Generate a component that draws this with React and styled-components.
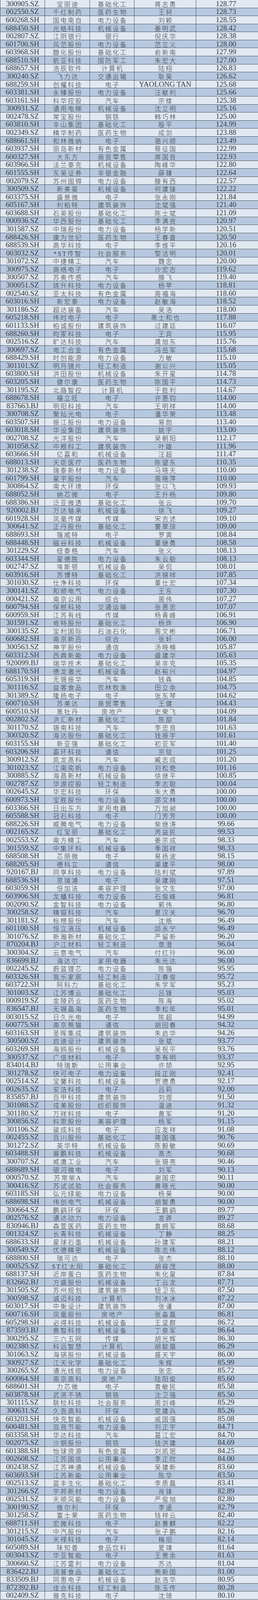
import React from 'react';
import styled, { createGlobalStyle } from 'styled-components';

const GlobalStyle = createGlobalStyle`
  html, body {
    margin: 0;
    padding: 0;
    background: #e2e9f2;
  }
`;

const raw = `300905.SZ,宝丽迪,基础化工,蒋志勇,128.77
002550.SZ,千红制药,医药生物,王轲,128.73
600268.SH,国电南自,电力设备,刘颖,128.55
688450.SH,光格科技,机械设备,姜明武,128.42
002807.SZ,江阴银行,银行,倪庆华,128.38
601700.SH,风范股份,电力设备,范立义,128.00
603968.SH,醋化股份,基础化工,俞新南,127.99
688510.SH,航亚科技,国防军工,朱宏大,127.00
688657.SH,浩辰软件,计算机,陆翔,126.83
300240.SZ,飞力达,交通运输,耿昊,126.62
688259.SH,创耀科技,电子,YAOLONG TAN,125.68
603381.SH,永臻股份,电力设备,汪献利,125.66
603161.SH,科华控股,汽车,宗楼,125.38
300931.SZ,通用电梯,机械设备,沈立明,125.16
002478.SZ,常宝股份,钢铁,韩巧林,125.00
603810.SH,丰山集团,基础化工,殷平,124.99
002349.SZ,精华制药,医药生物,成剑,123.88
688661.SH,和林微纳,电子,骆兴顺,123.49
603937.SH,丽岛新材,有色金属,蔡征国,122.99
600327.SH,大东方,商贸零售,席国良,122.93
603966.SH,法兰泰克,机械设备,陶峰华,122.80
601555.SH,东吴证券,非银金融,薛臻,122.64
002079.SZ,苏州固锝,电力设备,滕有西,122.57
300509.SZ,新美星,机械设备,何建锋,122.22
603375.SH,盛景微,电子,张永刚,121.84
605167.SH,利柏特,建筑装饰,沈斌强,121.40
603688.SH,石英股份,基础化工,陈士斌,121.09
000936.SZ,华西股份,基础化工,李满良,120.97
301587.SZ,中瑞股份,电力设备,杨学新,120.51
688426.SH,康为世纪,医药生物,王春香,120.50
688539.SH,高华科技,电子,李维平,120.16
003032.SZ,*ST传智,社会服务,黎活明,120.01
301072.SZ,中捷精工,汽车,魏忠,120.00
300975.SZ,商络电子,电子,沙宏志,119.62
300507.SZ,苏奥传感,汽车,滕飞,119.40
300051.SZ,琏升科技,电力设备,杨苹,118.81
002540.SZ,亚太科技,有色金属,周福海,118.60
603016.SH,新宏泰,电力设备,赵敏海,118.52
301186.SZ,超达装备,汽车,吴浩,118.00
605218.SH,伟时电子,电子,黑土和也,117.88
601133.SH,柏诚股份,建筑装饰,过建廷,116.07
688260.SH,昀冢科技,电子,王宾,115.95
002516.SZ,旷达科技,汽车,龚旭东,115.76
300697.SZ,电工合金,有色金属,冯岳军,115.68
688429.SH,时创能源,电力设备,方敏,115.10
301101.SZ,明月镜片,轻工制造,谢公兴,115.05
603800.SH,洪田股份,机械设备,朱开星,114.78
603205.SH,健尔康,医药生物,陈国平,114.73
301195.SZ,北路智控,计算机,于胜利,114.67
688678.SH,福立旺,电子,许惠钧,114.00
837663.BJ,明阳科技,汽车,王明祥,114.00
300708.SZ,聚灿光电,电子,潘华荣,113.48
603507.SH,振江股份,电力设备,易勋,113.40
603018.SH,华设集团,建筑装饰,姚宇,113.00
002708.SZ,光洋股份,汽车,吴朝阳,112.17
301058.SZ,中粮科工,建筑装饰,叶雄,111.96
603666.SH,亿嘉和,机械设备,汪超,111.47
688013.SH,天臣医疗,医药生物,陈望东,110.35
301238.SZ,瑞泰新材,电力设备,马晓天,110.00
601799.SH,星宇股份,汽车,周晓萍,110.00
300864.SZ,南大环境,环保,张以飞,109.93
688052.SH,纳芯微,电子,王升杨,109.80
688386.SH,泛亚微透,基础化工,张云,109.70
920002.BJ,万达轴承,机械设备,徐飞,109.27
601928.SH,凤凰传媒,传媒,宋吉述,109.10
300641.SZ,正丹股份,基础化工,曹翠琼,109.00
688693.SH,锴威特,电子,罗寅,108.84
688448.SH,磁谷科技,机械设备,董继勇,108.58
301229.SZ,纽泰格,汽车,张义,108.13
603344.SH,星德胜,电力设备,朱云舫,108.13
002747.SZ,埃斯顿,机械设备,吴侃,108.01
603916.SH,苏博特,基础化工,洪锦祥,107.85
301030.SZ,仕净科技,环保,董仕宏,107.34
300141.SZ,和顺电气,电力设备,王东,107.30
000421.SZ,南京公用,综合,周伟,107.27
600794.SH,保税科技,交通运输,张惠忠,107.07
600959.SH,江苏有线,传媒,杨青峰,106.91
301591.SZ,肯特股份,基础化工,杨烨,106.90
300135.SZ,宝利国际,石油石化,周文彬,106.71
600682.SH,南京新百,综合,张轩,106.00
300563.SZ,神宇股份,通信,汤晓楠,105.87
603312.SH,西典新能,电力设备,盛建华,105.63
920099.BJ,瑞华技术,基础化工,吴非克,105.35
688170.SH,德龙激光,机械设备,赵裕兴,104.97
605319.SH,无锡振华,汽车,钱犇,104.85
301116.SZ,益客食品,农林牧渔,田立余,104.75
301389.SZ,隆扬电子,电子,张东琴,104.62
600710.SH,苏美达,商贸零售,王健,104.43
600510.SH,黑牡丹,房地产,史荣飞,104.09
002802.SZ,洪汇新材,基础化工,陈甜,101.84
301170.SZ,锡南科技,汽车,李忠良,101.63
300320.SZ,海达股份,基础化工,钱振宇,101.61
603155.SH,新亚强,基础化工,初亚军,101.40
603206.SH,嘉环科技,通信,宗琰,101.25
300912.SZ,凯龙高科,汽车,臧志成,101.20
301023.SZ,江南奕帆,电力设备,刘松艳,101.16
300885.SZ,海昌新材,机械设备,徐继平,100.85
002787.SZ,华源控股,轻工制造,李志聪,100.04
002645.SZ,华宏科技,环保,朱大勇,100.00
600973.SH,宝胜股份,电力设备,邵文林,100.00
603366.SH,日出东方,家用电器,万旭昶,100.00
605588.SH,冠石科技,电子,门芳芳,100.00
688226.SH,威腾电气,电力设备,柴继涛,99.66
002165.SZ,红宝丽,基础化工,芮益民,99.53
002553.SZ,南方精工,汽车,姜宗成,98.33
301559.SZ,中集环科,机械设备,季国祥,98.33
688508.SH,芯朋微,电子,易扬波,98.15
688205.SH,德科立,通信,渠建平,98.00
920167.BJ,同享科技,电力设备,陆利斌,97.89
688536.SH,思瑞浦,电子,吴建刚,97.51
603059.SH,倍加洁,美容护理,张文生,97.00
603906.SH,龙蟠科技,电力设备,石俊峰,96.81
002090.SZ,金智科技,电力设备,郭伟,96.80
300258.SZ,精锻科技,汽车,夏汉关,96.70
301181.SZ,标榜股份,汽车,沈皓,96.49
601100.SH,恒立液压,机械设备,邱永宁,96.49
301076.SZ,新瀚新材,基础化工,严留新,96.20
870204.BJ,沪江材料,轻工制造,章澄,96.04
300304.SZ,云意电气,汽车,付红玲,96.00
836699.BJ,海达尔,家用电器,朱光达,96.00
002245.SZ,蔚蓝锂芯,电力设备,陈锴,95.95
603326.SH,我乐家居,轻工制造,汪春俊,95.72
603722.SH,阿科力,基础化工,朱学军,95.23
301003.SZ,江苏博云,基础化工,吕锋,95.03
000919.SZ,金陵药业,医药生物,陈海,95.02
836547.BJ,无锡晶海,医药生物,李松年,95.01
003015.SZ,日久光电,电子,陈超,94.99
600775.SH,南京熊猫,通信,胡回春,94.32
603163.SH,圣晖集成,建筑装饰,朱启华,94.26
300500.SZ,启迪设计,建筑装饰,张斌,93.77
603269.SH,海鸥股份,机械设备,吴祝平,93.76
300537.SZ,广信材料,电子,李有明,93.37
834014.BJ,特瑞斯,公用事业,许颉,92.95
301278.SZ,快可电子,电力设备,段正刚,92.41
002514.SZ,宝馨科技,机械设备,贺德勇,92.17
002635.SZ,安洁科技,电子,吕莉,92.00
835857.BJ,百甲科技,建筑装饰,刘煜,91.50
301088.SZ,戎美股份,纺织服饰,温迪,91.32
301180.SZ,万祥科技,电子,黄军,91.20
300856.SZ,科思股份,美容护理,杨军,91.15
301106.SZ,骏成科技,电子,应发祥,91.08
002455.SZ,百川股份,基础化工,蒋国强,90.76
301272.SZ,英华特,机械设备,陈毅敏,90.69
603488.SH,展鹏科技,机械设备,高杰,90.68
300707.SZ,威唐工业,汽车,张锡亮,90.46
688689.SH,银河微电,电子,刘军,90.13
000570.SZ,苏常柴A,汽车,谢国忠,90.11
300416.SZ,苏试试验,社会服务,黄晓光,90.00
603185.SH,弘元绿能,电力设备,杨昊,90.00
688698.SH,伟创电气,机械设备,胡智勇,90.00
300664.SZ,鹏鹞环保,环保,王鹏鹞,89.77
002576.SZ,通达动力,电力设备,言骅,89.27
830946.BJ,森萱医药,医药生物,袁拥军,88.68
001324.SZ,长青科技,机械设备,丁静,88.25
688633.SH,星球石墨,机械设备,孙建军,88.21
300549.SZ,优德精密,机械设备,陈志伟,88.12
688800.SH,瑞可达,电子,张杰,88.10
000525.SZ,ST红太阳,基础化工,胡容茂,88.00
688137.SH,近岸蛋白,医药生物,朱化星,87.84
832662.BJ,方盛股份,机械设备,丁云龙,87.71
301505.SZ,苏州规划,建筑装饰,钮卫东,87.50
300598.SZ,诚迈科技,计算机,刘冰冰,87.22
603017.SH,中衡设计,建筑装饰,张谨,87.00
600716.SH,凤凰股份,房地产,张淼磊,86.81
605298.SH,必得科技,机械设备,王坚群,86.72
873593.BJ,鼎智科技,机械设备,丁泉军,86.64
300295.SZ,三六五网,传媒,胡光辉,86.30
002380.SZ,科远智慧,计算机,胡歙眉,86.29
301063.SZ,海锅股份,机械设备,盛天宇,86.00
300927.SZ,江天化学,基础化工,朱辉,85.99
300265.SZ,通光线缆,电力设备,张忠,85.72
600064.SH,南京高科,房地产,陆阳俊,85.60
688601.SH,力芯微,电子,袁敏民,85.58
603878.SH,武进不锈,钢铁,沈卫强,85.50
301115.SZ,联检科技,社会服务,周剑峰,85.29
300631.SZ,久吾高科,环保,党建兵,85.26
603203.SH,快克智能,机械设备,戚国强,85.08
600481.SH,双良节能,电力设备,刘正宇,84.71
603358.SH,华达科技,汽车,葛江宏,84.70
002075.SZ,沙钢股份,钢铁,钱洪建,84.69
601388.SH,怡球资源,有色金属,刘凯珉,84.25
002608.SZ,江苏国信,公用事业,李正欣,84.00
002438.SZ,江苏神通,机械设备,吴建新,83.60
603693.SH,江苏新能,公用事业,陈华,83.50
002513.SZ,蓝丰生化,基础化工,李质磊,83.41
301266.SZ,宇邦新材,电力设备,肖锋,82.89
002531.SZ,天顺风能,电力设备,严俊旭,82.80
300190.SZ,维尔利,环保,李遥,82.79
301258.SZ,富士莱,医药生物,钱祥云,82.40
688711.SH,宏微科技,电子,赵善麒,82.22
301215.SZ,中汽股份,汽车,张子鹏,82.16
301045.SZ,天禄科技,电子,梅坦,82.14
605089.SH,味知香,食品饮料,夏靖,81.64
003043.SZ,华亚智能,电子,王景余,81.63
300660.SZ,江苏雷利,电力设备,苏达,81.04
836422.BJ,润普食品,基础化工,熊新国,81.00
833509.BJ,同惠电子,机械设备,赵浩华,80.95
872392.BJ,佳合科技,轻工制造,陈玉传,80.28
002409.SZ,雅克科技,电子,沈琦,80.10`;

const rows = raw.split('\n').map((line) => line.split(','));

const hasCjk = (text) => /[\u4e00-\u9fff]/.test(text);

const Sheet = styled.div`
  display: flex;
  flex-direction: column;
  height: 100vh;
  width: 100%;
  background: #e2e9f2;
`;

const Row = styled.div`
  flex: 1;
  min-height: 0;
  display: grid;
  grid-template-columns: 115px 115px 114px 158px 1fr;
  background: ${(p) => (p.$shaded ? '#b6c8df' : '#e1e8f1')};
  border-bottom: 1px solid #48505c;
  box-sizing: border-box;
`;

const Cell = styled.div`
  display: flex;
  align-items: center;
  justify-content: center;
  border-right: 1px solid #48505c;
  box-sizing: border-box;
  color: #3b3d42;
  white-space: nowrap;
  overflow: hidden;
  font-family: "Liberation Serif", "Noto Sans CJK SC", serif;
  font-size: 19px;

  &:first-child {
    border-left: 1px solid #48505c;
  }

  &:last-child {
    border-right: none;
    padding-right: 6px;
  }
`;

const Hanzi = styled.span`
  font-size: 16px;
  font-weight: 300;
  letter-spacing: 3px;
  margin-right: -3px;
`;

const CellText = ({ text }) =>
  hasCjk(text) ? <Hanzi>{text}</Hanzi> : <span>{text}</span>;

export default function App() {
  return (
    <>
      <GlobalStyle />
      <Sheet>
        {rows.map((r, i) => (
          <Row key={r[0] + i} $shaded={i % 2 === 1}>
            {r.map((val, j) => (
              <Cell key={j}>
                <CellText text={val} />
              </Cell>
            ))}
          </Row>
        ))}
      </Sheet>
    </>
  );
}
